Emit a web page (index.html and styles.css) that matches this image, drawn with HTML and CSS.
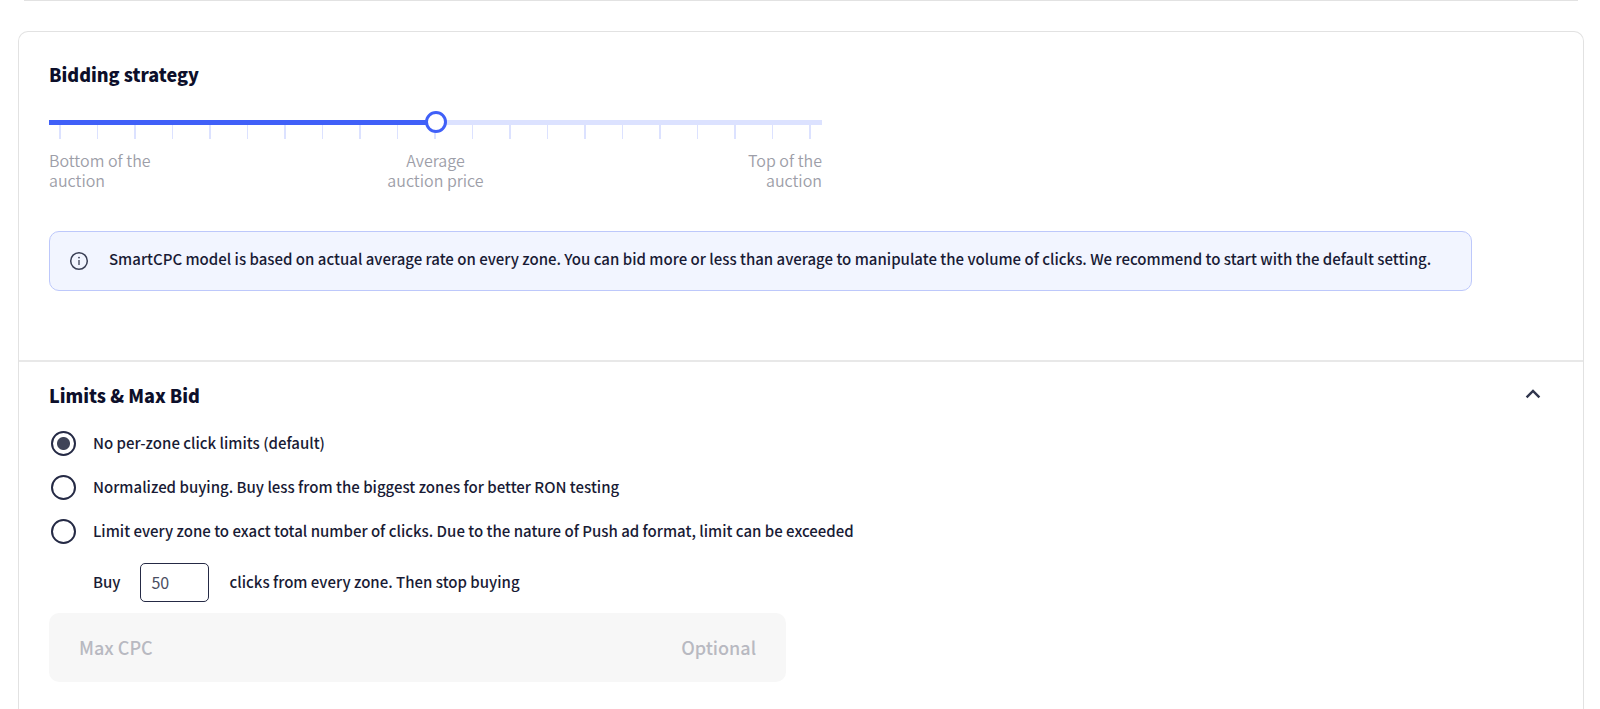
FILE: index.html
```
<!DOCTYPE html>
<html lang="en">
<head>
  <meta charset="utf-8">
  <title>Bidding strategy</title>
  <link rel="stylesheet" href="styles.css">
</head>
<body>
  <div class="previous-card"></div>
  <main class="card">
    <section class="bidding">
      <h2 class="title" id="bid-title">Bidding strategy</h2>
      <div class="slider">
        <input class="range" type="range" min="0" max="20" value="10" aria-labelledby="bid-title">
        <div class="ticks">
          <i></i><i></i><i></i><i></i><i></i><i></i><i></i>
          <i></i><i></i><i></i><i></i><i></i><i></i><i></i>
          <i></i><i></i><i></i><i></i><i></i><i></i><i></i>
        </div>
        <div class="marks">
          <span>Bottom of the<br>auction</span>
          <span>Average<br>auction price</span>
          <span>Top of the<br>auction</span>
        </div>
      </div>
      <div class="info">
        <svg class="info-icon" width="20" height="20" viewBox="0 0 20 20" fill="none" stroke="#3a3f55">
          <circle cx="10" cy="10" r="8.3" stroke-width="1.5"/>
          <path d="M10 9v5" stroke-width="1.3"/>
          <circle cx="10" cy="6.6" r="0.9" fill="#3a3f55" stroke="none"/>
        </svg>
        <p>SmartCPC model is based on actual average rate on every zone. You can bid more or less than average to manipulate the volume of clicks. We recommend to start with the default setting.</p>
      </div>
    </section>

    <section class="limits">
      <div class="limits-head">
        <h2 class="title">Limits &amp; Max Bid</h2>
        <button class="toggle" type="button" aria-label="Collapse">
          <svg width="16" height="16" viewBox="0 0 16 16" fill="none" stroke="#30364d" stroke-width="2.4">
            <path d="M1.6 11.4L8 5l6.4 6.4"/>
          </svg>
        </button>
      </div>
      <label class="option"><input type="radio" name="limit" checked><span>No per-zone click limits (default)</span></label>
      <label class="option"><input type="radio" name="limit"><span>Normalized buying. Buy less from the biggest zones for better RON testing</span></label>
      <label class="option"><input type="radio" name="limit"><span>Limit every zone to exact total number of clicks. Due to the nature of Push ad format, limit can be exceeded</span></label>
      <div class="buy">
        <label for="clicks">Buy</label>
        <input id="clicks" type="text" value="50">
        <span>clicks from every zone. Then stop buying</span>
      </div>
      <div class="max-cpc">
        <label for="max-cpc">Max CPC</label>
        <input id="max-cpc" type="text" placeholder="Optional">
      </div>
    </section>
  </main>
</body>
</html>
```
FILE: styles.css
```
:root {
  --title: #0d0f2b;
  --text: #191b35;
  --muted: #9d9ea8;
  --placeholder: #b8b9c1;
  --line: #e2e2e2;
  --blue: #4060f8;
  --blue-light: #dce2ff;
}

* {
  box-sizing: border-box;
}

body {
  margin: 0;
  font-family: "Noto Sans CJK SC", "Noto Sans", sans-serif;
  font-size: 15px;
  font-weight: 500;
  line-height: 20px;
  color: var(--text);
  background: #fff;
}

/* bottom edge of the card above */
.previous-card {
  height: 1px;
  margin: 0 22px 30px 24px;
  background: var(--line);
}

.card {
  margin: 0 16px 0 18px;
  border: 1px solid var(--line);
  border-bottom: 0;
  border-radius: 10px 10px 0 0;
}

.title {
  margin: 0;
  font-size: 18px;
  line-height: 24px;
  font-weight: 900;
  color: var(--title);
}

.bidding {
  padding: 30px 30px 69px;
}

.slider {
  max-width: 773px;
  margin-top: 25px;
}

.range {
  display: block;
  position: relative;
  width: 100%;
  height: 22px;
  margin: 0;
  appearance: none;
  background: none;
}

.range::-webkit-slider-runnable-track {
  height: 5px;
  background: linear-gradient(to right, var(--blue) 50%, var(--blue-light) 50%);
}

.range::-webkit-slider-thumb {
  appearance: none;
  width: 22px;
  height: 22px;
  margin-top: -9px;
  border: 3px solid var(--blue);
  border-radius: 50%;
  background: #fff;
}

.ticks {
  display: flex;
  justify-content: space-between;
  margin-top: -9px;
  padding: 0 11px 0 10px;
}

.ticks i {
  width: 1px;
  height: 15px;
  background: var(--blue-light);
}

.ticks i:nth-child(odd) {
  width: 2px;
}

.marks {
  display: grid;
  grid-template-columns: 1fr 1fr 1fr;
  margin-top: 11px;
  font-size: 16px;
  font-weight: 350;
  color: var(--muted);
}

.marks span:nth-child(2) {
  text-align: center;
}

.marks span:nth-child(3) {
  text-align: right;
}

.info {
  display: flex;
  align-items: center;
  gap: 20px;
  max-width: 1423px;
  margin-top: 41px;
  padding: 17px 19px 18px;
  border: 1px solid #bdc8fb;
  border-radius: 10px;
  background: #f2f5ff;
}

.info p {
  margin: 0;
  padding-bottom: 3px;
}

.info-icon {
  flex: none;
}

.limits {
  padding: 21px 30px 28px;
  border-top: 2px solid #e8e8e8;
}

.limits-head {
  display: flex;
  align-items: center;
  justify-content: space-between;
  margin-bottom: 24px;
}

.toggle {
  display: flex;
  margin-right: 12px;
  padding: 0 0 2px;
  border: 0;
  background: none;
}

.option {
  display: flex;
  align-items: center;
  gap: 17px;
  width: fit-content;
  margin-bottom: 19px;
}

.option span {
  padding-bottom: 2px;
}

.option input {
  flex: none;
  appearance: none;
  width: 25px;
  height: 25px;
  margin: 0 0 0 2px;
  border: 2px solid #252a45;
  border-radius: 50%;
}

.option input:checked {
  background: radial-gradient(circle, #3f4458 6px, transparent 7px);
}

.buy {
  display: flex;
  align-items: center;
  gap: 20px;
  margin-left: 44px;
  margin-bottom: 11px;
}

.buy label,
.buy span {
  padding-bottom: 2px;
}

.buy input {
  width: 69px;
  height: 39px;
  padding: 0 10px 2px;
  border: 1px solid #252a45;
  border-radius: 5px;
  font: inherit;
  font-size: 16px;
  font-weight: 400;
  color: #4a4e62;
}

.max-cpc {
  display: flex;
  align-items: center;
  justify-content: space-between;
  max-width: 737px;
  height: 69px;
  padding: 0 30px 2px;
  border-radius: 10px;
  background: #f7f7f7;
  font-size: 18px;
  line-height: 28px;
  color: var(--placeholder);
}

.max-cpc input {
  width: 50%;
  height: 28px;
  padding: 0;
  border: 0;
  background: none;
  font: inherit;
  text-align: right;
}

.max-cpc input::placeholder {
  color: var(--placeholder);
}
```
